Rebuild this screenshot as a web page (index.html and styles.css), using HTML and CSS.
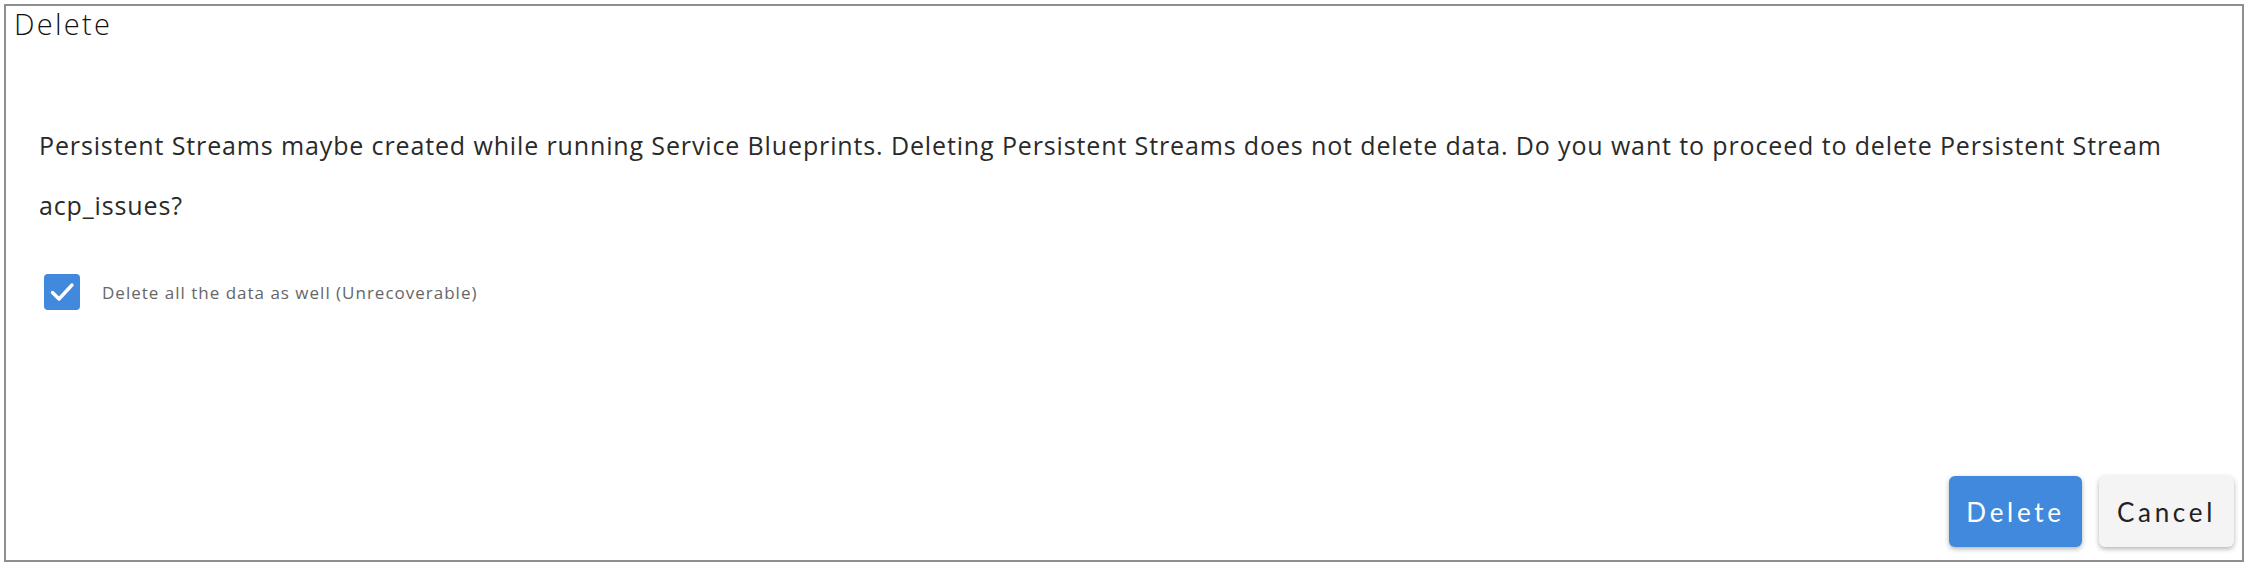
FILE: index.html
```html
<!DOCTYPE html>
<html lang="en">
<head>
<meta charset="utf-8">
<title>Delete</title>
<link rel="stylesheet" href="styles.css">
</head>
<body>
<div class="dialog">
  <div class="dialog-title">Delete</div>
  <div class="dialog-body">
    <p class="message">Persistent Streams maybe created while running Service Blueprints. Deleting Persistent Streams does not delete data. Do you want to proceed to delete Persistent Stream acp_issues?</p>
    <label class="check-row">
      <span class="checkbox">
        <svg viewBox="0 0 36 36" width="36" height="36"><path d="M8.5 18.5 L15 25 L28 11" fill="none" stroke="#fff" stroke-width="3.4" stroke-linecap="round" stroke-linejoin="round"/></svg>
      </span>
      <span class="check-label">Delete all the data as well (Unrecoverable)</span>
    </label>
  </div>
  <div class="dialog-actions">
    <button class="btn btn-primary">Delete</button>
    <button class="btn btn-secondary">Cancel</button>
  </div>
</div>
</body>
</html>
```
FILE: styles.css
```css
html, body {
  margin: 0;
  padding: 0;
  background: #ffffff;
}
body {
  font-family: "Open Sans", Lato, "Liberation Sans", sans-serif;
  color: #222;
}
.dialog {
  box-sizing: border-box;
  margin: 4px;
  width: 2240px;
  height: 558px;
  border: 2px solid #8f8f8f;
  display: flex;
  flex-direction: column;
}
.dialog-title {
  font-size: 29px;
  font-weight: 300;
  line-height: 32px;
  padding: 2px 0 0 8px;
  color: #111;
  letter-spacing: 2.3px;
}
.dialog-body {
  padding: 0 33px;
}
.message {
  margin: 0;
  padding-top: 75px;
  font-size: 25px;
  font-weight: 380;
  letter-spacing: 0.87px;
  line-height: 60px;
  color: #2a2a2a;
}
.check-row {
  display: flex;
  align-items: center;
  gap: 22px;
  margin-top: 39px;
  padding-left: 5px;
}
.checkbox {
  width: 36px;
  height: 36px;
  border-radius: 4px;
  background: #4189dd;
  display: flex;
}
.check-label {
  font-size: 17px;
  letter-spacing: 1px;
  color: #666;
}
.dialog-actions {
  margin-top: auto;
  display: flex;
  justify-content: flex-end;
  gap: 17px;
  padding: 0 8px 13px 0;
}
.btn {
  height: 71px;
  border: none;
  border-radius: 6px;
  font-family: Lato, "Open Sans", sans-serif;
  font-size: 26px;
  letter-spacing: 3.7px;
  box-shadow: 0 2px 5px rgba(0, 0, 0, 0.3);
  cursor: pointer;
}
.btn-primary {
  width: 133px;
  background: #4189dd;
  color: #fff;
}
.btn-secondary {
  width: 135px;
  background: #f4f4f4;
  color: #222;
}
```
